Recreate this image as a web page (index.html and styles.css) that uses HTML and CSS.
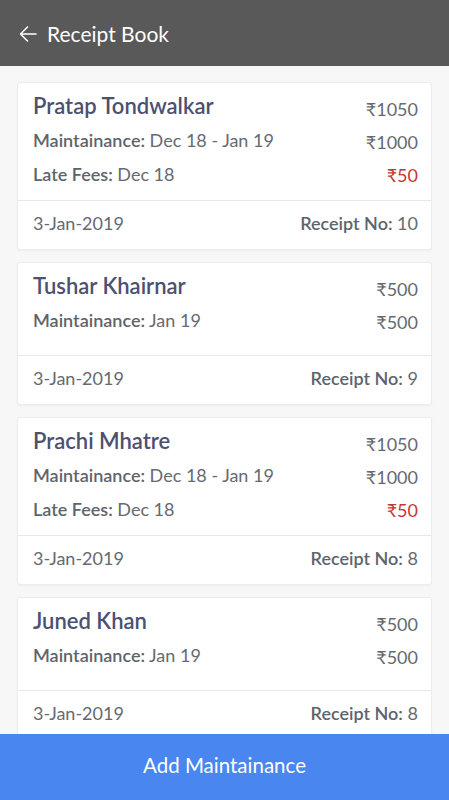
FILE: index.html
```html
<!DOCTYPE html>
<html lang="en">
<head>
  <meta charset="UTF-8">
  <meta name="viewport" content="width=device-width, initial-scale=1.0">
  <title>Receipt Book</title>
  <link rel="stylesheet" href="styles.css">
</head>
<body>
  <div class="app">
    <header class="topbar">
      <svg class="back" width="18" height="16" viewBox="0 0 18 16">
        <path d="M17 8H1.5M8.5 1L1.5 8l7 7" fill="none" stroke="#fff" stroke-width="1.5" stroke-linecap="round" stroke-linejoin="round"/>
      </svg>
      <h1>Receipt Book</h1>
    </header>

    <main class="list">
      <div class="card">
        <div class="card-body">
          <div class="rows">
            <div class="name">Pratap Tondwalkar</div>
            <div class="line"><b>Maintainance:</b> Dec 18 - Jan 19</div>
            <div class="line"><b>Late Fees:</b> Dec 18</div>
          </div>
          <div class="amounts">
            <div>₹1050</div>
            <div>₹1000</div>
            <div class="late">₹50</div>
          </div>
        </div>
        <div class="card-foot">
          <span>3-Jan-2019</span>
          <span><b>Receipt No:</b> 10</span>
        </div>
      </div>

      <div class="card">
        <div class="card-body short">
          <div class="rows">
            <div class="name">Tushar Khairnar</div>
            <div class="line"><b>Maintainance:</b> Jan 19</div>
          </div>
          <div class="amounts">
            <div>₹500</div>
            <div>₹500</div>
          </div>
        </div>
        <div class="card-foot">
          <span>3-Jan-2019</span>
          <span><b>Receipt No:</b> 9</span>
        </div>
      </div>

      <div class="card">
        <div class="card-body">
          <div class="rows">
            <div class="name">Prachi Mhatre</div>
            <div class="line"><b>Maintainance:</b> Dec 18 - Jan 19</div>
            <div class="line"><b>Late Fees:</b> Dec 18</div>
          </div>
          <div class="amounts">
            <div>₹1050</div>
            <div>₹1000</div>
            <div class="late">₹50</div>
          </div>
        </div>
        <div class="card-foot">
          <span>3-Jan-2019</span>
          <span><b>Receipt No:</b> 8</span>
        </div>
      </div>

      <div class="card">
        <div class="card-body short">
          <div class="rows">
            <div class="name">Juned Khan</div>
            <div class="line"><b>Maintainance:</b> Jan 19</div>
          </div>
          <div class="amounts">
            <div>₹500</div>
            <div>₹500</div>
          </div>
        </div>
        <div class="card-foot">
          <span>3-Jan-2019</span>
          <span><b>Receipt No:</b> 8</span>
        </div>
      </div>
    </main>

    <button class="add-btn">Add Maintainance</button>
  </div>
</body>
</html>
```

FILE: styles.css
```css
/* base */
body {
  margin: 0;
  font-family: Lato, "Open Sans", sans-serif;
  background-color: #f7f7f7;
}
.app {
  height: 800px;
  display: flex;
  flex-direction: column;
  overflow: hidden;
}

/* header */
.topbar {
  height: 66px;
  flex-shrink: 0;
  background-color: #595959;
  display: flex;
  align-items: center;
  padding-left: 19px;
  box-sizing: border-box;
}
.topbar .back {
  margin-right: 10px;
  margin-top: 1px;
}
.topbar h1 {
  margin: 0;
  color: #ffffff;
  font-size: 21px;
  font-weight: 400;
}

/* cards */
.list {
  flex: 1;
  overflow: hidden;
  padding: 16px 17px 0 17px;
  display: flex;
  flex-direction: column;
  gap: 12px;
}
.card {
  background-color: #ffffff;
  border: 1px solid #ececec;
  border-radius: 3px;
  box-shadow: 0 1px 2px rgba(0, 0, 0, 0.04);
  flex-shrink: 0;
}
.card-body {
  display: flex;
  justify-content: space-between;
  padding: 6px 13px 8px 15px;
  border-bottom: 1px solid #e8e8e8;
}
.card-body.short {
  padding-bottom: 16px;
}
.rows, .amounts {
  display: flex;
  flex-direction: column;
}
.rows > div {
  height: 34px;
  line-height: 34px;
}
.amounts > div {
  height: 33px;
  line-height: 33px;
  text-align: right;
}
.amounts {
  padding-top: 4px;
  color: #666a70;
  font-size: 18px;
}
.amounts .late {
  color: #c6372f;
}
.name {
  font-size: 22px;
  font-weight: 600;
  color: #4c5071;
}
.line {
  font-size: 18px;
  color: #666a70;
}
.line b, .card-foot b {
  font-weight: 600;
  color: #5e646c;
}
.card-foot {
  display: flex;
  justify-content: space-between;
  align-items: center;
  height: 44px;
  padding: 0 13px 4px 15px;
  font-size: 18px;
  color: #666a70;
}

/* bottom button */
.add-btn {
  height: 66px;
  flex-shrink: 0;
  border: none;
  background-color: #4a86f0;
  color: #ffffff;
  font-family: Lato, "Open Sans", sans-serif;
  font-size: 20.5px;
  padding: 0 0 4px 0;
}
```
